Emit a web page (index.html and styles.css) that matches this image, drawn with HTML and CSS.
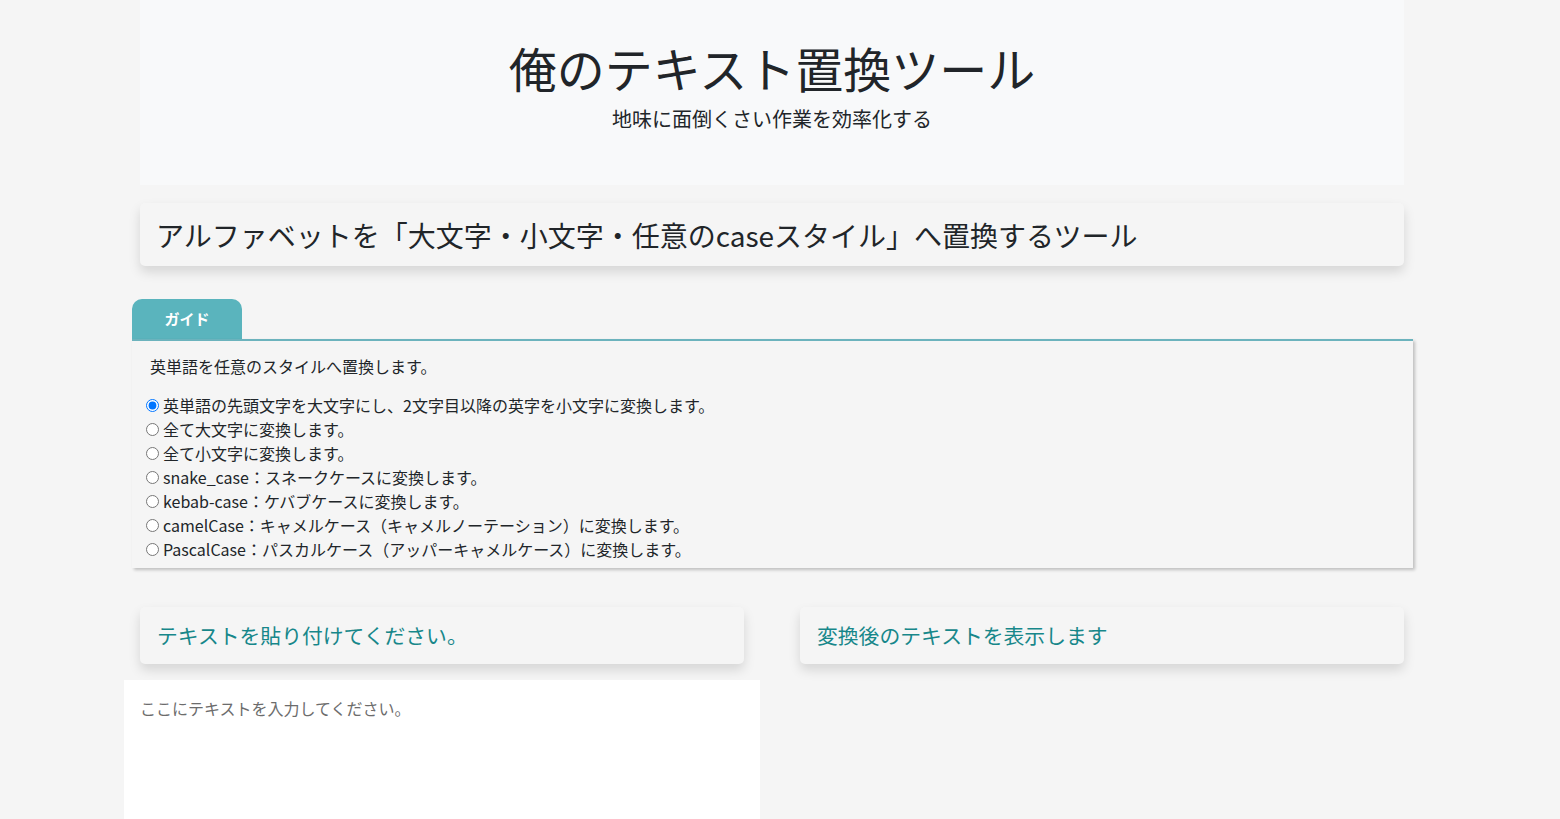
FILE: index.html
```html
<!DOCTYPE html>
<html lang="ja">
<head>
<meta charset="UTF-8">
<meta name="viewport" content="width=device-width, initial-scale=1.0">
<title>俺のテキスト置換ツール</title>
<link rel="stylesheet" href="styles.css">
</head>
<body>

<div class="container">
  <header class="hero">
    <h1>俺のテキスト置換ツール</h1>
    <p>地味に面倒くさい作業を効率化する</p>
  </header>

  <div class="card title-card">
    <h2>アルファベットを「大文字・小文字・任意のcaseスタイル」へ置換するツール</h2>
  </div>

  <div class="guide">
    <div class="guide-tab">ガイド</div>
    <div class="guide-body">
      <p class="guide-lead">英単語を任意のスタイルへ置換します。</p>
      <ul class="options">
        <li><label><input type="radio" name="mode" value="capitalize" checked>英単語の先頭文字を大文字にし、2文字目以降の英字を小文字に変換します。</label></li>
        <li><label><input type="radio" name="mode" value="upper">全て大文字に変換します。</label></li>
        <li><label><input type="radio" name="mode" value="lower">全て小文字に変換します。</label></li>
        <li><label><input type="radio" name="mode" value="snake">snake_case：スネークケースに変換します。</label></li>
        <li><label><input type="radio" name="mode" value="kebab">kebab-case：ケバブケースに変換します。</label></li>
        <li><label><input type="radio" name="mode" value="camel">camelCase：キャメルケース（キャメルノーテーション）に変換します。</label></li>
        <li><label><input type="radio" name="mode" value="pascal">PascalCase：パスカルケース（アッパーキャメルケース）に変換します。</label></li>
      </ul>
    </div>
  </div>

  <div class="columns">
    <div class="column">
      <div class="card sub-card">
        <h3>テキストを貼り付けてください。</h3>
      </div>
      <textarea class="text-input" placeholder="ここにテキストを入力してください。"></textarea>
    </div>
    <div class="column">
      <div class="card sub-card">
        <h3>変換後のテキストを表示します</h3>
      </div>
      <div class="text-output"></div>
    </div>
  </div>
</div>

</body>
</html>
```

FILE: styles.css
```css
body {
    font-family: "Noto Sans CJK JP", "Noto Sans", sans-serif;
    margin: 0;
    padding: 0 16px 0 0;
    background-color: #f5f5f5;
    color: #212529;
  }

  .container {
    width: 1296px;
    margin: 0 auto;
  }

  .hero {
    margin: 0 16px;
    height: 185px;
    padding-top: 39px;
    box-sizing: border-box;
    background-color: #f8f9fa;
    text-align: center;
  }

  .hero h1 {
    margin: 0;
    font-size: 48px;
    font-weight: 400;
    line-height: 1.2;
  }

  .hero p {
    margin: 8px 0 0;
    font-size: 20px;
    line-height: 1.4;
  }

  .card {
    background-color: #f5f5f5;
    border-radius: 5px;
    box-shadow: 0 6px 12px rgba(0, 0, 0, 0.13);
  }

  .title-card {
    margin: 18px 16px 0;
    height: 63px;
    display: flex;
    align-items: center;
    padding: 0 16px;
  }

  .title-card h2 {
    margin: 0;
    font-size: 28px;
    font-weight: 400;
  }

  .guide {
    margin: 33px 7px 0 8px;
  }

  .guide-tab {
    width: 110px;
    height: 40px;
    line-height: 40px;
    text-align: center;
    background-color: #5ab4bd;
    color: #fff;
    font-weight: 700;
    font-size: 15px;
    border-radius: 10px 10px 0 0;
  }

  .guide-body {
    border-top: 2px solid #6cb3bd;
    background-color: #f5f5f5;
    box-shadow: 2px 2px 3px rgba(0, 0, 0, 0.22);
    padding: 13px 14px 7px;
  }

  .guide-lead {
    margin: 0 0 15px 4px;
    font-size: 16px;
    line-height: 24px;
  }

  .options {
    list-style-type: none;
    padding: 0;
    margin: 0;
  }

  .options li {
    font-size: 16px;
    line-height: 24px;
  }

  .options label {
    display: flex;
    align-items: center;
  }

  .options input[type="radio"] {
    margin: 0 4px 0 0;
    width: 13px;
    height: 13px;
  }

  .columns {
    display: flex;
    gap: 24px;
    margin-top: 39px;
  }

  .column {
    flex: 1;
  }

  .sub-card {
    margin: 0 16px;
    height: 55px;
    display: flex;
    align-items: center;
    padding: 0 0 2px 17px;
  }

  .sub-card h3 {
    margin: 0;
    font-size: 20.8px;
    font-weight: 400;
    color: #17878a;
  }

  .text-input {
    display: block;
    width: 100%;
    height: 220px;
    margin-top: 16px;
    box-sizing: border-box;
    border: none;
    background-color: #fff;
    padding: 16px;
    font-family: inherit;
    font-size: 16px;
    resize: none;
  }

  .text-input::placeholder {
    color: #6c6c6c;
  }
```
